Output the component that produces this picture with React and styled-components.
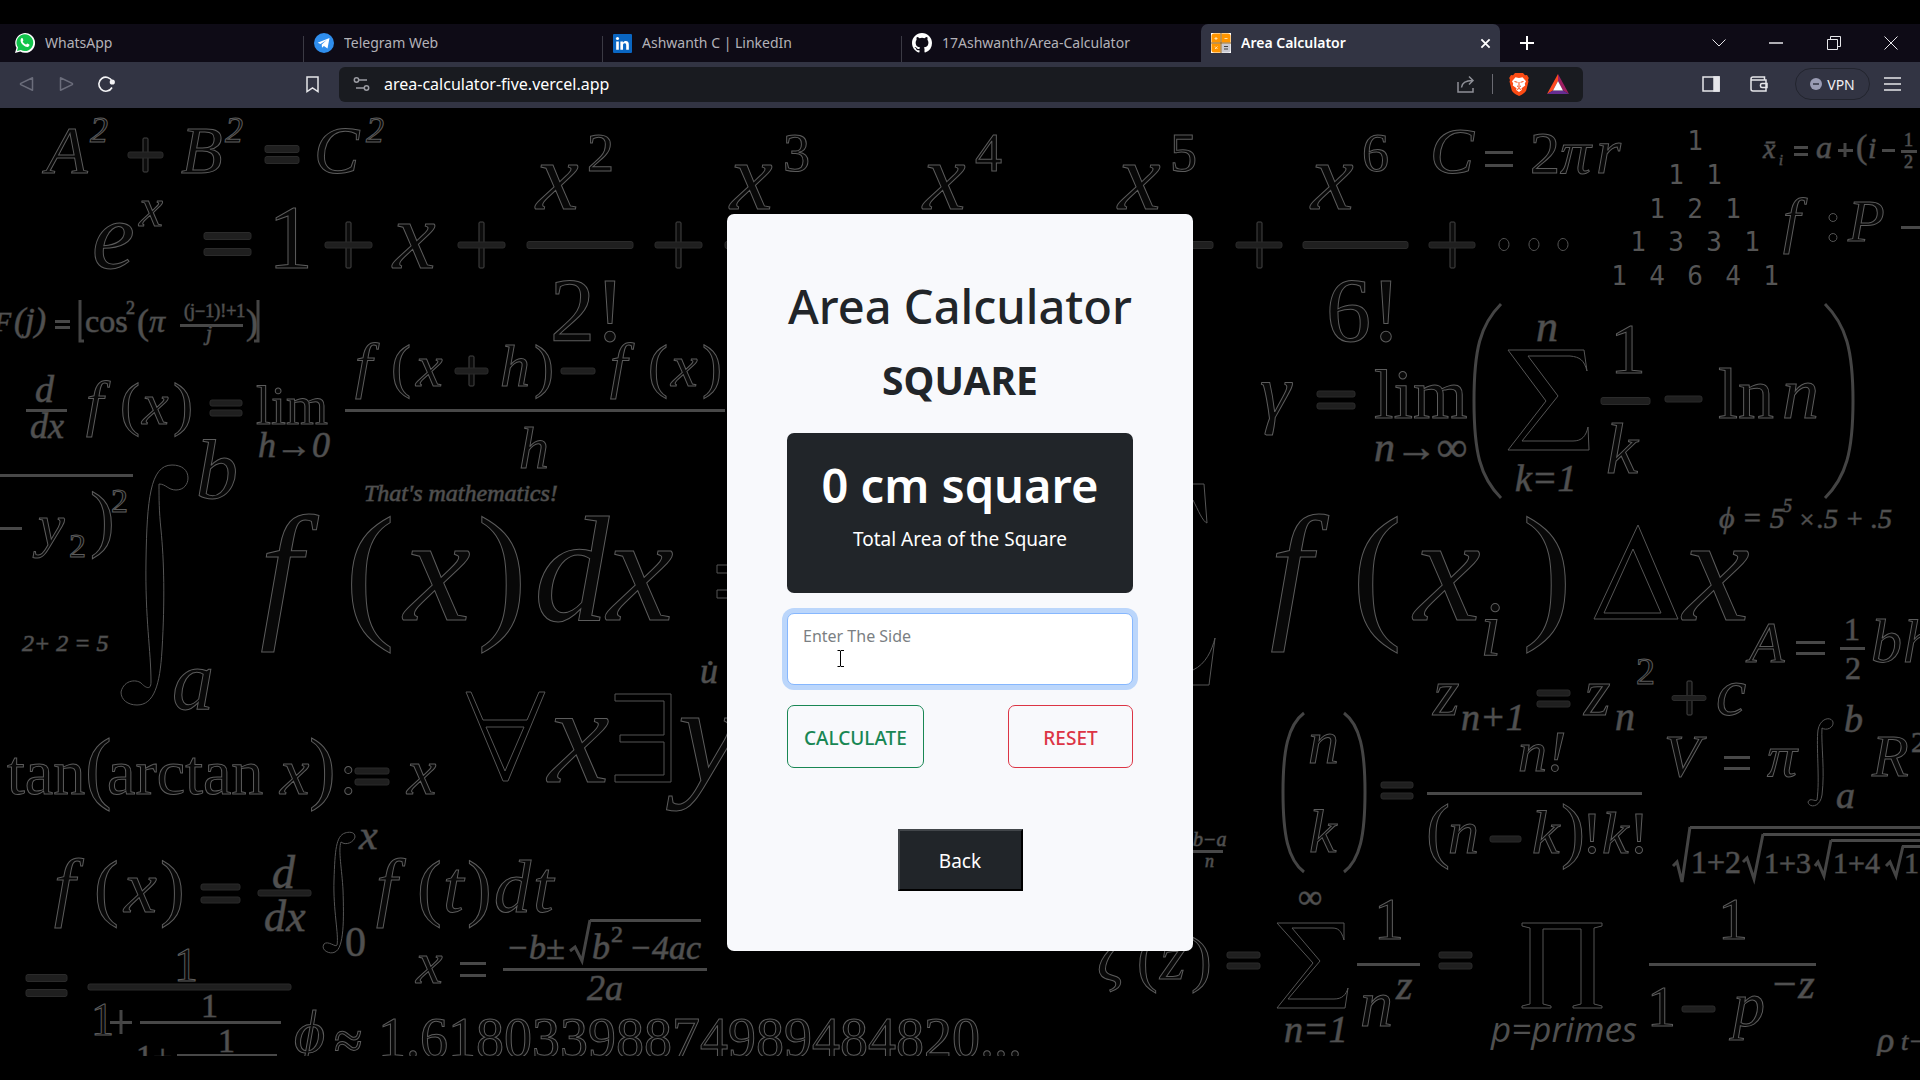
import React from 'react';
import styled, { createGlobalStyle, css } from 'styled-components';

const GlobalStyle = createGlobalStyle`
  *, *::before, *::after { box-sizing: border-box; }
  body {
    margin: 0;
    background: #000;
    color: #212529;
    font-family: 'Noto Sans', 'Open Sans', sans-serif;
  }
  button, input { font: inherit; }
`;

/* ---------- Browser window ---------- */

const Window = styled.div`
  min-height: 100vh;
  padding: 24px 0;
  display: flex;
  flex-direction: column;
  background: #000;
`;

const TabBar = styled.header`
  height: 38px;
  display: flex;
  align-items: stretch;
  padding-left: 5px;
  background: #0e0b16;
`;

const TabList = styled.nav`
  display: flex;
  flex: 0 1 1495px;
  min-width: 0;
`;

const Tab = styled.a`
  flex: 1 1 0;
  min-width: 0;
  position: relative;
  display: flex;
  align-items: center;
  gap: 10px;
  padding: 0 9px 0 10px;
  font-size: 14px;
  line-height: 20px;
  color: #b3b2b8;
  text-decoration: none;
  white-space: nowrap;

  &:not(:first-child)::before {
    content: '';
    align-self: flex-end;
    width: 1px;
    height: 26px;
    margin-left: -11px;
    background: #3b3a44;
  }

  ${(p) =>
    p.$active &&
    css`
      background: #323443;
      border-radius: 7px 7px 0 0;
      color: #fff;
      font-weight: 600;
      &:not(:first-child)::before { background: transparent; }
    `}
`;

const TabTitle = styled.span`
  flex: 1;
  overflow: hidden;
`;

const IconButton = styled.button`
  display: grid;
  place-items: center;
  flex: none;
  width: ${(p) => p.$w || 24}px;
  padding: 0;
  border: 0;
  background: none;
  color: ${(p) => p.$color || '#e6e6ea'};
`;

const WindowControls = styled.div`
  display: flex;
  align-items: stretch;
  margin-left: auto;
`;

const Toolbar = styled.div`
  height: 46px;
  display: flex;
  align-items: center;
  padding-bottom: 2px;
  background: #323443;
`;

const NavGroup = styled.div`
  width: 339px;
  display: flex;
  align-items: center;
  gap: 16px;
  padding: 0 15px 0 14px;
`;

const Spacer = styled.span`
  flex: 1;
`;

const AddressBar = styled.form`
  flex: 1;
  height: 35px;
  display: flex;
  align-items: center;
  gap: 14px;
  padding: 0 12px 0 14px;
  border-radius: 6px;
  background: #191b20;
`;

const AddressInput = styled.input`
  flex: 1;
  min-width: 0;
  padding: 0;
  border: 0;
  outline: 0;
  background: none;
  color: #fff;
  font-size: 16px;
  line-height: 24px;
`;

const Divider = styled.span`
  width: 1px;
  height: 20px;
  background: #6a6b72;
`;

const ToolGroup = styled.div`
  width: 337px;
  display: flex;
  align-items: center;
  justify-content: flex-end;
  gap: 24px;
  padding-right: 16px;
`;

const VpnButton = styled.button`
  display: flex;
  align-items: center;
  justify-content: center;
  gap: 5px;
  width: 75px;
  height: 32px;
  margin-right: -14px;
  padding: 0;
  border: 1px solid #22242e;
  border-radius: 16px;
  background: none;
  color: #f0f0f3;
  font-size: 14px;
`;

/* ---------- Page ---------- */

const Page = styled.main`
  flex: 1;
  display: grid;
  overflow: hidden;
  background: #000;
`;

const Backdrop = styled.div`
  grid-area: 1 / 1;
  min-height: 0;
  contain: size;

  svg {
    display: block;
    width: 100%;
    height: 100%;
  }
`;

const Card = styled.section`
  grid-area: 1 / 1;
  place-self: center;
  z-index: 1;
  width: min(466px, 100%);
  padding: 60px;
  border-radius: 7px;
  background: #f8f9fc;
  text-align: center;
`;

const Title = styled.h1`
  margin: 0 -20px;
  font-size: 47px;
  line-height: 64px;
  font-weight: 500;
  white-space: nowrap;
`;

const ShapeName = styled.h2`
  margin: 18px 0 29px;
  font-size: 39px;
  line-height: 48px;
  font-weight: 700;
`;

const Result = styled.div`
  height: 160px;
  padding: 22px 16px;
  border-radius: 7px;
  background: #212529;
  color: #fff;
`;

const ResultValue = styled.h2`
  margin: 0 0 9px;
  font-size: 47px;
  line-height: 60px;
  font-weight: 600;
  white-space: nowrap;
`;

const ResultLabel = styled.p`
  margin: 0;
  font-size: 19px;
  line-height: 30px;
`;

const Field = styled.label`
  position: relative;
  display: block;
  margin: 20px 0;
`;

const SideInput = styled.input`
  display: block;
  width: 100%;
  height: 72px;
  padding: 10px 15px 36px;
  border: 1px solid #86b7fe;
  border-radius: 7px;
  outline: 0;
  background: #fff;
  box-shadow: 0 0 0 5px #bbd6fb;
  font-size: 16px;
  line-height: 24px;

  &::placeholder { color: #7b7f83; opacity: 1; }
`;

const Pointer = styled.svg`
  position: absolute;
  left: 50px;
  top: 37px;
`;

const Actions = styled.div`
  display: flex;
  justify-content: space-between;
  margin-bottom: 61px;
`;

const ActionButton = styled.button`
  min-width: 125px;
  height: 63px;
  padding: 4px 16px 0;
  border: 1px solid ${(p) => p.$tone};
  border-radius: 7px;
  background: transparent;
  color: ${(p) => p.$tone};
  font-size: 19px;
  line-height: 30px;
  font-weight: 500;
`;

const BackButton = styled.button`
  width: 125px;
  height: 62px;
  padding: 2px 0 0;
  border: 2px solid;
  border-color: #42464a #000 #000 #42464a;
  background: #212529;
  color: #fff;
  font-size: 19px;
  line-height: 30px;
`;

/* ---------- Icons ---------- */

const WhatsAppIcon = () => (
  <svg width="20" height="20" viewBox="0 0 20 20">
    <path d="M0 20l1.500-5.200A9.900 9.900 0 1 1 5.300 18.600z" fill="#fff" />
    <path d="M2 18l1-3.500A8.400 8.400 0 1 1 5.800 17z" fill="#12c34b" />
    <path d="M6.200 5.500c.5-.6 1.300-.5 1.500 0l.7 1.700c.1.400-.7 1.100-.7 1.400.6 1.300 1.800 2.400 3.200 3 .5 0 1-1.200 1.500-1.100l1.900.9c.5.4-.2 1.900-1 2.300-1.300.6-3.400-.1-5.200-1.700C6 10.200 4.800 7.400 6.200 5.500z" fill="#fff" />
  </svg>
);
const TelegramIcon = () => (
  <svg width="20" height="20" viewBox="0 0 20 20">
    <circle cx="10" cy="10" r="10" fill="#2f8eed" />
    <path d="M3.600 9.800L15.500 5l-2 10.600-3.600-2.700-1.900 1.800-.3-3.300 5-4.300-6.200 3.800z" fill="#fff" />
  </svg>
);
const LinkedInIcon = () => (
  <svg width="19" height="19" viewBox="0 0 18 18">
    <rect width="18" height="18" rx="1" fill="#0a66c2" />
    <path d="M3 7h2.500v8H3zM7 7h2.400v1.200C10 7.200 11 6.700 12 6.700c2.300 0 3 1.400 3 3.700V15h-2.500v-4.200c0-1.200-.3-2-1.400-2-1.200 0-1.600.9-1.600 2V15H7z" fill="#fff" />
    <circle cx="4.250" cy="4.300" r="1.500" fill="#fff" />
  </svg>
);
const GitHubIcon = () => (
  <svg width="20" height="20" viewBox="0 0 16 16">
    <path fill="#fff" d="M8 0C3.580 0 0 3.580 0 8c0 3.540 2.290 6.530 5.470 7.590.4.070.55-.17.55-.38 0-.19-.01-.82-.01-1.490-2.010.37-2.530-.49-2.690-.94-.09-.23-.48-.94-.82-1.130-.28-.15-.68-.52-.01-.53.63-.01 1.080.58 1.230.82.72 1.210 1.870.87 2.330.66.07-.52.28-.87.51-1.070-1.780-.2-3.640-.89-3.640-3.950 0-.87.31-1.590.82-2.150-.08-.2-.36-1.020.08-2.120 0 0 .67-.21 2.200.82a7.500 7.500 0 0 1 4 0c1.530-1.040 2.200-.82 2.200-.82.44 1.100.16 1.920.08 2.120.51.56.82 1.270.82 2.150 0 3.070-1.870 3.750-3.650 3.950.29.25.54.73.54 1.480 0 1.070-.01 1.930-.01 2.200 0 .21.15.46.55.38A8.010 8.010 0 0 0 16 8c0-4.420-3.580-8-8-8z" />
  </svg>
);
const CalculatorIcon = () => (
  <svg width="20" height="20" viewBox="0 0 20 20">
    <rect width="20" height="20" fill="#fff" />
    <path d="M3 .5h6.500v9H.5V3A2.500 2.500 0 0 1 3 .5zM10.500.5H17A2.500 2.500 0 0 1 19.500 3v6.500h-9zM.5 10.500h9v9H3A2.500 2.500 0 0 1 .5 17z" fill="#ff9500" />
    <path d="M10.500 10.500h9V17a2.500 2.500 0 0 1-2.500 2.500h-6.500z" fill="#c9c9d2" />
    <path d="M0 10h20M10 0v20" stroke="#8a5a13" strokeWidth="1" />
    <path d="M3.500 5.500h3M5 4v3M13.500 5.500h3M4 13.500l2.500 2.500M6.500 13.500L4 16" stroke="#ffe0ac" />
    <path d="M13 13.500h4M13 16h4" stroke="#444" />
  </svg>
);
const BraveIcon = () => (
  <svg width="20" height="23" viewBox="0 0 20 23">
    <path d="M6 0h8l2 2.200 2-.2 1.800 3-.8 2 .5 1.500-2.300 9C16.500 19.500 12 22.200 10 23c-2-.8-6.500-3.500-7.200-5.500L.5 8.500 1 7 .2 5 2 2l2 .2z" fill="#fb4b14" />
    <path d="M10 5l3.500-.8L17 8.200l-1.200 2.300.4 2-3.700 2.800L12.800 17 10 19l-2.800-2 .3-1.700-3.700-2.800.4-2L3 8.200l3.500-4z" fill="#fff" />
    <path d="M5.500 8.500l3 .8M14.500 8.500l-3 .8M10 9v4.500M8 12.800l2 1.700 2-1.700M8 16.500l2-1 2 1" stroke="#fb4b14" fill="none" />
  </svg>
);
const RewardsIcon = () => (
  <svg width="22" height="20" viewBox="0 0 22 20">
    <path d="M11 0L0 20l6-3.500L11 7z" fill="#ff4a1f" />
    <path d="M11 0l11 20-6-3.500L11 7z" fill="#9e1f63" />
    <path d="M0 20h22l-6-3.500H6z" fill="#662d91" />
    <path d="M11 7l5 9.500H6z" fill="#fff" />
  </svg>
);

const line = { fill: 'none', stroke: 'currentColor' };

/* ---------- Chalkboard backdrop ---------- */

/* Glyphs drawn as outlines: x, baseline, size, text, upright? */
const outlined = [
  [46, 173, 68, 'A'], [90, 142, 36, '2'], [181, 173, 68, 'B'], [225, 142, 36, '2'], [314, 173, 68, 'C'], [366, 142, 36, '2'],
  [92, 268, 96, 'e'], [139, 226, 54, 'x'], [268, 268, 90, '1', 1], [393, 268, 96, 'x'],
  [536, 209, 96, 'x'], [587, 171, 54, '2', 1], [730, 209, 96, 'x'], [783, 171, 54, '3', 1],
  [923, 209, 96, 'x'], [975, 171, 54, '4', 1], [1118, 209, 96, 'x'], [1170, 171, 54, '5', 1],
  [1311, 209, 96, 'x'], [1362, 171, 54, '6', 1],
  [550, 341, 90, '2!', 1], [1326, 341, 90, '6!', 1],
  [86, 424, 62, 'f'], [120, 424, 60, '(', 1], [142, 424, 60, 'x'], [173, 424, 60, ')', 1], [256, 424, 54, 'lim', 1],
  [355, 386, 62, 'f'], [391, 386, 60, '(', 1], [416, 386, 60, 'x'], [500, 386, 60, 'h'], [534, 386, 60, ')', 1],
  [610, 386, 62, 'f'], [648, 386, 60, '(', 1], [671, 386, 60, 'x'], [702, 386, 60, ')', 1], [519, 468, 60, 'h'],
  [38, 545, 60, 'y'], [69, 557, 34, '2', 1], [90, 543, 74, ')', 1], [111, 512, 34, '2', 1],
  [196, 498, 84, 'b'], [172, 709, 84, 'a'],
  [260, 620, 150, 'f'], [345, 621, 150, '(', 1], [404, 620, 150, 'x'], [477, 621, 150, ')', 1], [534, 620, 150, 'd'], [607, 620, 150, 'x'],
  [548, 782, 138, 'x'], [678, 782, 138, 'y'],
  [7, 794, 64, 'tan', 1], [85, 794, 80, '(', 1], [107, 794, 64, 'arctan', 1], [280, 794, 66, 'x'], [309, 794, 80, ')', 1], [340, 794, 60, ':', 1], [407, 794, 66, 'x'],
  [54, 912, 76, 'f'], [94, 912, 74, '(', 1], [124, 912, 74, 'x'], [160, 912, 74, ')', 1],
  [376, 912, 76, 'f'], [417, 912, 74, '(', 1], [443, 912, 74, 't'], [467, 912, 74, ')', 1], [494, 912, 74, 'd'], [533, 912, 74, 't'],
  [416, 983, 60, 'x'], [174, 981, 48, '1', 1], [91, 1035, 46, '1', 1],
  [294, 1052, 60, 'ϕ'], [334, 1058, 52, '≈', 1], [378, 1057, 56, '1.61803398874989484820...', 1],
  [1430, 173, 66, 'C'], [1530, 173, 60, '2', 1], [1560, 173, 62, 'π'], [1596, 173, 64, 'r'],
  [1783, 241, 62, 'f'], [1848, 241, 60, 'P'],
  [1260, 418, 78, 'γ'], [1374, 418, 70, 'lim', 1], [1610, 373, 72, '1', 1], [1606, 473, 72, 'k'], [1718, 418, 72, 'ln', 1], [1782, 418, 74, 'n'],
  [1270, 620, 150, 'f'], [1352, 621, 150, '(', 1], [1414, 620, 150, 'x'], [1480, 655, 78, 'i'], [1522, 621, 150, ')', 1], [1683, 620, 150, 'x'],
  [1749, 662, 58, 'A'], [1871, 662, 62, 'b'], [1903, 662, 62, 'h'],
  [1433, 715, 68, 'z'], [1584, 715, 68, 'z'], [1636, 684, 38, '2', 1], [1716, 715, 68, 'c'],
  [1308, 763, 62, 'n'], [1309, 852, 62, 'k'], [1518, 771, 58, 'n!'],
  [1426, 854, 72, '(', 1], [1448, 853, 62, 'n'], [1532, 853, 62, 'k'], [1561, 854, 72, ')', 1], [1582, 853, 60, '!', 1], [1602, 853, 60, 'k'], [1629, 853, 60, '!', 1],
  [1664, 776, 60, 'V'], [1767, 776, 60, 'π'], [1872, 776, 60, 'R'],
  [1097, 980, 68, 'ζ'], [1137, 980, 62, '(', 1], [1160, 979, 66, 'z'], [1191, 980, 62, ')', 1],
  [1374, 939, 60, '1', 1], [1360, 1026, 66, 'n'], [1718, 939, 60, '1', 1], [1647, 1026, 58, '1', 1], [1733, 1026, 64, 'p'],
];

/* Small glyphs drawn solid: x, baseline, size, text, upright? */
const solid = [
  [-6, 331, 28, 'F', 0], [14, 331, 34, '(j)', 0], [85, 332, 32, 'cos', 1], [126, 314, 18, '2', 1], [137, 334, 36, '(', 1], [149, 332, 32, 'π'], [246, 334, 36, ')', 1],
  [184, 317, 18, '(j−1)!+1', 1], [206, 340, 22, 'j'],
  [35, 402, 38, 'd'], [30, 438, 36, 'dx'], [258, 457, 36, 'h→0'],
  [364, 501, 24, "That's mathematics!"], [22, 651, 24, '2+ 2 = 5'], [700, 683, 36, 'u̇'],
  [272, 888, 46, 'd'], [264, 931, 44, 'dx'], [359, 849, 42, 'x'], [345, 956, 42, '0', 1],
  [506, 959, 34, '−b±'], [592, 959, 36, 'b'], [611, 942, 24, '2', 1], [629, 959, 34, '−4ac'], [587, 1000, 36, '2a'],
  [201, 1017, 34, '1', 1], [218, 1052, 34, '1', 1], [136, 1068, 34, '1+', 1],
  [1763, 158, 28, 'x̄'], [1779, 165, 14, 'i'], [1816, 158, 32, 'a'], [1856, 158, 34, '(', 1], [1868, 158, 30, 'i'],
  [1904, 146, 18, '1', 1], [1904, 168, 18, '2', 1],
  [1374, 461, 42, 'n→∞'], [1536, 341, 44, 'n'], [1515, 491, 38, 'k=1'],
  [1719, 528, 30, 'ϕ = 5'], [1783, 512, 18, '5'], [1798, 528, 26, '×'], [1817, 528, 28, '.5 + .5'],
  [1844, 640, 32, '1', 1], [1845, 679, 32, '2', 1], [1461, 730, 38, 'n+1'], [1615, 730, 40, 'n'],
  [1844, 732, 38, 'b'], [1836, 808, 38, 'a'], [1911, 752, 30, '2', 1],
  [1691, 873, 32, '1+2', 1], [1764, 873, 30, '1+3', 1], [1833, 873, 30, '1+4', 1], [1904, 873, 30, '1', 1],
  [1298, 908, 34, '∞', 1], [1284, 1042, 38, 'n=1'], [1396, 999, 42, 'z'], [1770, 998, 42, '−z'],
  [1193, 846, 20, 'b−a'], [1205, 867, 18, 'n'], [1877, 1052, 36, 'ρ'], [1901, 1050, 26, 't−'],
];

const pascal = [
  [150, '1'], [184, '1 1'], [218, '1 2 1'], [251, '1 3 3 1'], [285, '1 4 6 4 1'],
];

/* Thick strokes of operators and fraction bars: x1, x2, y, thickness */
const bars = [
  [128, 163, 155, 6], [265, 299, 149, 7], [265, 299, 160, 7], [204, 251, 236, 7], [204, 251, 252, 7],
  [325, 372, 245, 6], [458, 505, 245, 6], [527, 633, 245, 7], [655, 702, 245, 6], [725, 800, 245, 7],
  [1140, 1213, 245, 7], [1236, 1282, 245, 6], [1303, 1408, 245, 7], [1429, 1475, 245, 6],
  [210, 242, 403, 6], [210, 242, 413, 6], [455, 488, 371, 6], [561, 595, 371, 6],
  [355, 389, 771, 6], [355, 389, 782, 6], [201, 240, 887, 6], [201, 240, 900, 6], [258, 311, 893, 6],
  [26, 67, 978, 7], [26, 67, 993, 7], [88, 291, 987, 6],
  [1317, 1355, 394, 6], [1317, 1355, 406, 6], [1601, 1650, 401, 7], [1665, 1702, 399, 6],
  [1537, 1570, 693, 6], [1537, 1570, 704, 6], [1672, 1706, 698, 5],
  [1381, 1413, 785, 6], [1381, 1413, 796, 6], [1490, 1521, 839, 6],
  [1227, 1260, 955, 6], [1227, 1260, 966, 6], [1439, 1472, 955, 6], [1439, 1472, 966, 6], [1682, 1715, 1009, 6],
];

/* Vertical arms of the large plus signs: x, top, bottom */
const arms = [
  [145, 138, 172], [348, 222, 268], [481, 222, 268], [678, 222, 268], [1259, 222, 268], [1452, 222, 268],
  [471, 356, 386], [1689, 681, 715],
];

/* Fine rules: x1, x2, y */
const rules = [
  [0, 133, 475], [0, 22, 528], [26, 67, 410], [345, 725, 410], [55, 70, 321], [55, 70, 327], [180, 243, 325],
  [460, 486, 963], [460, 486, 975], [503, 707, 969], [590, 701, 920], [140, 281, 1022], [177, 277, 1055], [110, 132, 1022],
  [1485, 1513, 152], [1485, 1513, 165], [1794, 1808, 147], [1794, 1808, 154], [1838, 1853, 150], [1882, 1895, 150], [1901, 1917, 151], [1901, 1920, 227],
  [1796, 1825, 642], [1796, 1825, 653], [1840, 1865, 648], [1427, 1642, 793], [1724, 1750, 757], [1724, 1750, 768],
  [1690, 1920, 827], [1763, 1920, 834], [1831, 1920, 840], [1902, 1920, 846],
  [1357, 1420, 964], [1649, 1816, 964], [1193, 1223, 851],
];

const shapes = [
  'M159 484C166 484 168 490 176 490C184 490 188 484 188 478C188 470 182 465 172 465C150 465 147 500 146 560C145 620 151 650 151 682C151 692 144 686 142 684C138 679 124 679 121 692C121 700 128 705 137 705C154 705 160 685 162 650C165 600 164 560 161 530C159 510 159 500 159 484Z',
  'M341 842C346 846 354 842 355 837C355 831 348 832 345 833C336 836 335 850 334 880C333 910 339 935 337 945C336 948 328 940 324 944C320 950 330 955 335 952C344 948 344 920 343 890C342 870 338 850 341 842Z',
  'M1822 728C1826 731 1834 728 1833 722C1831 716 1820 718 1818 730C1816 745 1820 780 1817 800C1815 802 1810 797 1808 802C1809 808 1820 808 1822 795C1825 770 1821 745 1822 728Z',
  'M466 692L471 692L483 720L527 720L539 692L545 692L508 781L503 781ZM486 727L524 727L505 771Z',
  'M615 694H671V782H615V775H664V742H620V735H664V701H615Z',
  'M717 565H740V573H717ZM717 590H740V598H717Z',
  'M1508 350H1584L1587 371C1584 360 1580 357 1570 356H1528L1558 396L1522 441H1573C1582 441 1586 436 1588 427L1589 450H1508L1546 401Z',
  'M1277 923H1344V940C1341 930 1338 928 1332 928H1292L1320 961L1288 999H1334C1342 999 1346 995 1348 988L1345 1008H1277L1313 963Z',
  'M1522 923H1602V926L1594 928V1004L1602 1006V1008H1573V1006L1581 1004V929H1543V1004L1551 1006V1008H1522V1006L1530 1004V928L1522 926Z',
  'M1594 619L1638 525L1678 619ZM1604 613L1633 549L1661 613Z',
  'M1193 484H1204L1207 523C1203 522 1198 510 1193 500',
  'M1193 670C1206 664 1212 650 1215 638L1209 685H1193',
  'M1499 245a5 6 0 1 0 0 -1ZM1529 245a5 6 0 1 0 0 -1ZM1558 245a5 6 0 1 0 0 -1Z',
  'M1829 218a4 4 0 1 0 0 -1ZM1829 238a4 4 0 1 0 0 -1Z',
];

const strokes = [
  'M80 300V341H84M258 300V341H254',
  'M1501 304C1480 325 1474 350 1474 401C1474 452 1480 477 1501 498',
  'M1825 304C1846 325 1853 350 1853 401C1853 452 1846 477 1825 498',
  'M1304 713C1288 725 1283 750 1283 792C1283 835 1288 860 1304 872',
  'M1344 713C1360 725 1365 750 1365 792C1365 835 1360 860 1344 872',
  'M570 951L575 947L582 961L590 920',
  'M1673 866L1677 862L1682 882L1690 827',
  'M1743 862L1747 858L1754 879L1763 834',
  'M1815 866L1818 862L1824 876L1831 840',
  'M1886 866L1890 862L1896 876L1903 846',
  'M121 1010V1034M1845 143V157',
];

const Glyphs = ({ items, ...rest }) => (
  <g {...rest}>
    {items.map(([x, y, size, text, upright], i) => (
      <text key={i} x={x} y={y} fontSize={size} fontStyle={upright ? 'normal' : 'italic'}>
        {text}
      </text>
    ))}
  </g>
);

const Formulas = () => (
  <svg viewBox="0 108 1920 948" preserveAspectRatio="xMidYMin slice" aria-hidden="true" fontFamily="'Liberation Serif', 'DejaVu Serif', serif">
    {arms.map(([x, top, bottom], i) => (
      <rect key={i} x={x - 2} y={top} width="5" height={bottom - top} rx="1" fill="#0c0c0c" stroke="#444" />
    ))}
    {bars.map(([x1, x2, y, t], i) => (
      <rect key={i} x={x1} y={y - t / 2} width={x2 - x1} height={t} rx="2" fill="#1f1f1f" stroke="#2b2b2b" />
    ))}
    {rules.map(([x1, x2, y], i) => (
      <rect key={i} x={x1} y={y - 1} width={x2 - x1} height="3" fill="#484848" />
    ))}
    <g fill="none" stroke="#555">
      {shapes.map((d) => <path key={d} d={d} />)}
    </g>
    <g fill="none" stroke="#444" strokeWidth="3">
      {strokes.map((d) => <path key={d} d={d} />)}
    </g>
    <Glyphs items={outlined} fill="#080808" stroke="#5c5c5c" strokeWidth="1" />
    <Glyphs items={solid} fill="#505050" stroke="#333" strokeWidth="1" paintOrder="stroke" />
    <g fill="#555" fontFamily="'DejaVu Sans Mono', monospace" fontSize="26" textAnchor="middle">
      {pascal.map(([y, row]) => {
        const cells = row.split(' ');
        return cells.map((n, i) => (
          <text key={y + '-' + i} x={1695 + (i - (cells.length - 1) / 2) * 38} y={y}>{n}</text>
        ));
      })}
    </g>
    <text x="1491" y="1042" fontFamily="'Open Sans', sans-serif" fontStyle="italic" fontSize="35" fill="#505050">p=primes</text>
  </svg>
);

/* ---------- App ---------- */

const tabs = [
  { title: 'WhatsApp', Icon: WhatsAppIcon },
  { title: 'Telegram Web', Icon: TelegramIcon },
  { title: 'Ashwanth C | LinkedIn', Icon: LinkedInIcon },
  { title: '17Ashwanth/Area-Calculator', Icon: GitHubIcon },
  { title: 'Area Calculator', Icon: CalculatorIcon, active: true },
];

export default function App() {
  return (
    <Window>
      <GlobalStyle />
      <TabBar>
        <TabList>
          {tabs.map(({ title, Icon, active }) => (
            <Tab key={title} href="#" $active={active}>
              <Icon />
              <TabTitle>{title}</TabTitle>
              {active && (
                <svg width="11" height="11" viewBox="0 0 12 12" {...line} strokeWidth="2"><path d="M1.500 1.500l9 9M10.500 1.500l-9 9" /></svg>
              )}
            </Tab>
          ))}
        </TabList>
        <IconButton $w={54} $color="#fff" aria-label="New tab">
          <svg width="16" height="16" viewBox="0 0 16 16" {...line} strokeWidth="2"><path d="M8 1v14M1 8h14" /></svg>
        </IconButton>
        <WindowControls>
          <IconButton $w={56} aria-label="Search tabs"><svg width="14" height="8" viewBox="0 0 14 8" {...line}><path d="M.5.5L7 7l6.500-6.500" /></svg></IconButton>
          <IconButton $w={58} aria-label="Minimize"><svg width="14" height="2"><path d="M0 1h14" {...line} strokeWidth="1.500" /></svg></IconButton>
          <IconButton $w={57} aria-label="Restore"><svg width="14" height="14" viewBox="0 0 14 14" {...line}><path d="M.5 3.500h10v10H.5zM3.500 3V.5h10v10H11" /></svg></IconButton>
          <IconButton $w={58} aria-label="Close"><svg width="14" height="14" viewBox="0 0 14 14" {...line}><path d="M.5.5l13 13M13.500.5l-13 13" /></svg></IconButton>
        </WindowControls>
      </TabBar>

      <Toolbar>
        <NavGroup>
          <IconButton $color="#6b6d7b" aria-label="Back in history"><svg width="15" height="16" viewBox="0 0 15 16" {...line} strokeWidth="1.500"><path d="M13.500 1.800v12.400L1.800 8.600a.7.700 0 0 1 0-1.200z" strokeLinejoin="round" /></svg></IconButton>
          <IconButton $color="#6b6d7b" aria-label="Forward"><svg width="15" height="16" viewBox="0 0 15 16" {...line} strokeWidth="1.500"><path d="M1.500 1.800v12.400l11.700-5.600a.7.700 0 0 0 0-1.200z" strokeLinejoin="round" /></svg></IconButton>
          <IconButton $color="#f4f4f6" aria-label="Reload"><svg width="18" height="18" viewBox="0 0 18 18" {...line} strokeWidth="1.600"><path d="M15 12.500A7 7 0 1 1 15.300 6.500" /><circle cx="15.300" cy="7" r="1.800" fill="currentColor" /></svg></IconButton>
          <Spacer />
          <IconButton aria-label="Bookmark"><svg width="13" height="17" viewBox="0 0 13 17" {...line} strokeWidth="1.500"><path d="M1 1h11v14.500l-5.500-3.700L1 15.500z" /></svg></IconButton>
        </NavGroup>
        <AddressBar>
          <svg width="17" height="14" viewBox="0 0 17 14" fill="none" stroke="#9b9ca3" strokeWidth="1.500"><circle cx="3.500" cy="3" r="2.200" /><path d="M6 3h8M3 11h8" /><circle cx="13.500" cy="11" r="2.200" /></svg>
          <AddressInput aria-label="Address" defaultValue="area-calculator-five.vercel.app" />
          <IconButton type="button" $color="#8e9097" aria-label="Share"><svg width="18" height="18" viewBox="0 0 18 18" {...line} strokeWidth="1.500"><path d="M1 7v10h15v-4M4.500 12.500C5 8 8 5.500 15.500 5.500M12 1.500l4 4-4 4" /></svg></IconButton>
          <Divider />
          <IconButton type="button" aria-label="Shields"><BraveIcon /></IconButton>
          <IconButton type="button" $w={26} aria-label="Rewards"><RewardsIcon /></IconButton>
        </AddressBar>
        <ToolGroup>
          <IconButton aria-label="Sidebar"><svg width="18" height="16" viewBox="0 0 18 16" {...line} strokeWidth="1.500"><path d="M1 1h16v14H1z" /><path d="M12 1h5v14h-5z" fill="currentColor" /></svg></IconButton>
          <IconButton aria-label="Wallet"><svg width="18" height="16" viewBox="0 0 18 16" {...line} strokeWidth="1.500"><path d="M16 4.500V15H3a2 2 0 0 1-2-2V3a2 2 0 0 1 2-2h11.500v3M1 4h15v2M17 7.500h-5a1.500 1.500 0 0 0-1.500 1.500v1a1.500 1.500 0 0 0 1.500 1.500h5z" /></svg></IconButton>
          <VpnButton>
            <svg width="12" height="12" viewBox="0 0 12 12"><circle cx="6" cy="6" r="6" fill="#9a9cb4" /><path d="M3 6h6" stroke="#323443" strokeWidth="1.500" /></svg>
            VPN
          </VpnButton>
          <IconButton $w={24} aria-label="Menu"><svg width="17" height="14" viewBox="0 0 17 14" {...line} strokeWidth="1.500"><path d="M0 1h17M0 7h17M0 13h17" /></svg></IconButton>
        </ToolGroup>
      </Toolbar>

      <Page>
        <Backdrop><Formulas /></Backdrop>
        <Card>
          <Title>Area Calculator</Title>
          <ShapeName>SQUARE</ShapeName>
          <Result>
            <ResultValue>0 cm square</ResultValue>
            <ResultLabel>Total Area of the Square</ResultLabel>
          </Result>
          <Field>
            <SideInput aria-label="Enter The Side" placeholder="Enter The Side" />
            <Pointer width="8" height="17" viewBox="0 0 8 17" fill="none" stroke="#000"><path d="M.5.5h2.500l.500.500.500-.500h3M3.500 1v15M.5 16.500h2.500l.500-.500.500.500h3" /></Pointer>
          </Field>
          <Actions>
            <ActionButton $tone="#198754">CALCULATE</ActionButton>
            <ActionButton $tone="#dc3545">RESET</ActionButton>
          </Actions>
          <BackButton>Back</BackButton>
        </Card>
      </Page>
    </Window>
  );
}
